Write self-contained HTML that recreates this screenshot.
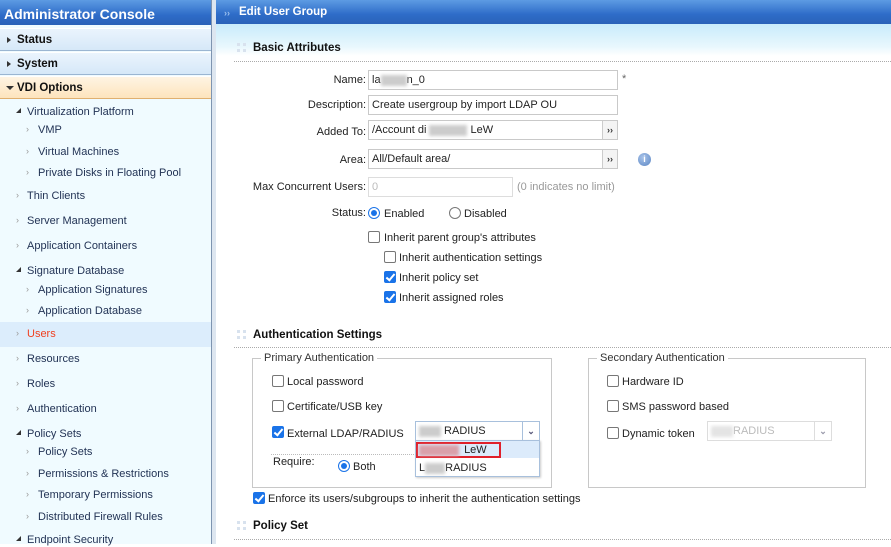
<!DOCTYPE html>
<html><head><meta charset="utf-8"><style>
*{margin:0;padding:0;box-sizing:border-box}
body{width:891px;height:544px;overflow:hidden;position:relative;background:#fff;font-family:"Liberation Sans",sans-serif;font-size:11px;color:#222}
.a{position:absolute;white-space:nowrap;line-height:14px}
.side{position:absolute;left:0;top:0;width:211px;height:544px;background:#f0fbff}
.hdr{position:absolute;top:0;height:25px;background:linear-gradient(#5d9be3,#2e6cc8 60%,#2a62b8);color:#fff;font-weight:bold}
.cat{position:absolute;left:0;width:211px;height:23px;background:linear-gradient(#eaf4fd,#d6e8f8);border-bottom:1px solid #9bb6d2;border-top:1px solid #fff;font-weight:bold;font-size:11.5px;color:#111;padding-left:17px;line-height:22px}
.ar{position:absolute;left:7px;top:8px;width:0;height:0;border-top:3.5px solid transparent;border-bottom:3.5px solid transparent;border-left:4px solid #333}
.sub{color:#223355}
.chev{position:absolute;color:#999;font-size:9px}
.tri{position:absolute;width:0;height:0;border-left:5px solid transparent;border-bottom:5px solid #333}
.in{position:absolute;height:20px;border:1px solid #c9c9c9;background:#fff;padding-left:3px;line-height:18px}
.btn{position:absolute;right:0;top:0;width:15px;height:18px;border-left:1px solid #ccc;background:#f4f4f4;font-size:9px;text-align:center;line-height:18px;font-weight:bold;color:#333}
.cb{position:absolute;width:12px;height:12px;border:1px solid #777;border-radius:2px;background:#fff}
.cb.on{background:#1a73e8;border-color:#1a73e8}
.cb.on:after{content:"";position:absolute;left:3px;top:0px;width:3px;height:7px;border:solid #fff;border-width:0 2px 2px 0;transform:rotate(40deg)}
.rd{position:absolute;width:12px;height:12px;border:1px solid #777;border-radius:50%;background:#fff}
.rd.on{border-color:#1a73e8}
.rd.on:after{content:"";position:absolute;left:2px;top:2px;width:6px;height:6px;border-radius:50%;background:#1a73e8}
.dot{position:absolute;left:234px;right:0;border-top:1px dotted #aaa}
.sec{position:absolute;font-weight:bold;font-size:11.5px;color:#111}
.grip{position:absolute;width:10px;height:10px;background:
linear-gradient(#d8e2ee,#d8e2ee) 0 0/3px 3px no-repeat,linear-gradient(#d8e2ee,#d8e2ee) 6px 0/3px 3px no-repeat,linear-gradient(#d8e2ee,#d8e2ee) 0 6px/3px 3px no-repeat,linear-gradient(#d8e2ee,#d8e2ee) 6px 6px/3px 3px no-repeat}
.fs{position:absolute;border:1px solid #c8c8c8}
.lg{position:absolute;background:#fff;padding:0 3px;top:-8px;line-height:14px;color:#333}
.blur{display:inline-block;background:#ccc;height:11px;vertical-align:middle;filter:blur(1.5px)}
.lbl{text-align:right;width:160px}
</style></head><body>

<div class="side"></div>
<div class="hdr" style="left:0;width:211px;font-size:14px;padding-left:4px;line-height:28px">Administrator Console</div>
<div class="cat" style="top:28px"><span class="ar"></span>Status</div>
<div class="cat" style="top:52px"><span class="ar"></span>System</div>
<div class="cat" style="top:76px;background:linear-gradient(#fff4e3,#fde4bd);border-bottom-color:#e0b070"><span style="position:absolute;left:6px;top:9px;border-left:4px solid transparent;border-right:4px solid transparent;border-top:4px solid #333"></span>VDI Options</div>
<div style="position:absolute;left:211px;top:0;width:1px;height:544px;background:#7e94b0"></div>
<div style="position:absolute;left:212px;top:0;width:4px;height:544px;background:#dde6f0"></div>
<div style="position:absolute;left:0;top:322px;width:211px;height:25px;background:#dcedfc"></div>

<span class="tri" style="left:16px;top:108px"></span><div class="a sub" style="left:27px;top:105px">Virtualization Platform</div>
<span class="chev" style="left:26px;top:124px">›</span><div class="a sub" style="left:38px;top:123px">VMP</div>
<span class="chev" style="left:26px;top:146px">›</span><div class="a sub" style="left:38px;top:145px">Virtual Machines</div>
<span class="chev" style="left:26px;top:167px">›</span><div class="a sub" style="left:38px;top:166px">Private Disks in Floating Pool</div>
<span class="chev" style="left:16px;top:190px">›</span><div class="a sub" style="left:27px;top:189px">Thin Clients</div>
<span class="chev" style="left:16px;top:215px">›</span><div class="a sub" style="left:27px;top:214px">Server Management</div>
<span class="chev" style="left:16px;top:240px">›</span><div class="a sub" style="left:27px;top:239px">Application Containers</div>
<span class="tri" style="left:16px;top:267px"></span><div class="a sub" style="left:27px;top:264px">Signature Database</div>
<span class="chev" style="left:26px;top:284px">›</span><div class="a sub" style="left:38px;top:283px">Application Signatures</div>
<span class="chev" style="left:26px;top:305px">›</span><div class="a sub" style="left:38px;top:304px">Application Database</div>
<span class="chev" style="left:16px;top:328px">›</span><div class="a" style="left:27px;top:327px;color:#f04020">Users</div>
<span class="chev" style="left:16px;top:353px">›</span><div class="a sub" style="left:27px;top:352px">Resources</div>
<span class="chev" style="left:16px;top:378px">›</span><div class="a sub" style="left:27px;top:377px">Roles</div>
<span class="chev" style="left:16px;top:403px">›</span><div class="a sub" style="left:27px;top:402px">Authentication</div>
<span class="tri" style="left:16px;top:430px"></span><div class="a sub" style="left:27px;top:427px">Policy Sets</div>
<span class="chev" style="left:26px;top:446px">›</span><div class="a sub" style="left:38px;top:445px">Policy Sets</div>
<span class="chev" style="left:26px;top:468px">›</span><div class="a sub" style="left:38px;top:467px">Permissions &amp; Restrictions</div>
<span class="chev" style="left:26px;top:489px">›</span><div class="a sub" style="left:38px;top:488px">Temporary Permissions</div>
<span class="chev" style="left:26px;top:511px">›</span><div class="a sub" style="left:38px;top:510px">Distributed Firewall Rules</div>
<span class="tri" style="left:16px;top:536px"></span><div class="a sub" style="left:27px;top:533px">Endpoint Security</div>

<!-- content -->
<div class="hdr" style="left:216px;width:675px;height:24px;font-size:11.5px;line-height:24px;padding-left:23px">Edit User Group</div>
<div class="a" style="left:224px;top:6px;color:#9cc0ee;font-size:9px;font-weight:bold">››</div>
<div style="position:absolute;left:216px;top:24px;width:675px;height:32px;background:linear-gradient(#c8ebfb,#e8f7fd 70%,#fff)"></div>

<div class="grip" style="left:237px;top:43px"></div>
<div class="sec" style="left:253px;top:42px">Basic Attributes</div>
<div class="dot" style="top:61px"></div>

<div class="a lbl" style="left:206px;top:73px">Name:</div>
<div class="in" style="left:368px;top:70px;width:250px">la<span class="blur" style="width:26px"></span>n_0</div>
<div class="a" style="left:622px;top:72px;color:#666">*</div>
<div class="a lbl" style="left:206px;top:98px">Description:</div>
<div class="in" style="left:368px;top:95px;width:250px">Create usergroup by import LDAP OU</div>
<div class="a lbl" style="left:206px;top:125px">Added To:</div>
<div class="in" style="left:368px;top:120px;width:250px">/Account di <span class="blur" style="width:38px"></span> LeW<div class="btn">››</div></div>
<div class="a lbl" style="left:206px;top:153px">Area:</div>
<div class="in" style="left:368px;top:149px;width:250px">All/Default area/<div class="btn">››</div></div>
<div style="position:absolute;left:638px;top:153px;width:13px;height:13px;border-radius:50%;background:radial-gradient(circle at 40% 35%,#a9c4ea,#5b86c4);color:#fff;font-size:9px;font-weight:bold;text-align:center;line-height:13px">i</div>
<div class="a lbl" style="left:206px;top:180px">Max Concurrent Users:</div>
<div class="in" style="left:368px;top:177px;width:145px;border-color:#ddd;color:#bbb">0</div>
<div class="a" style="left:517px;top:180px;color:#999">(0 indicates no limit)</div>

<div class="a lbl" style="left:206px;top:206px">Status:</div>
<div class="rd on" style="left:368px;top:207px"></div><div class="a" style="left:384px;top:207px">Enabled</div>
<div class="rd" style="left:449px;top:207px"></div><div class="a" style="left:464px;top:207px">Disabled</div>
<div class="cb" style="left:368px;top:231px"></div><div class="a" style="left:384px;top:231px">Inherit parent group's attributes</div>
<div class="cb" style="left:384px;top:251px"></div><div class="a" style="left:399px;top:251px">Inherit authentication settings</div>
<div class="cb on" style="left:384px;top:271px"></div><div class="a" style="left:399px;top:271px">Inherit policy set</div>
<div class="cb on" style="left:384px;top:291px"></div><div class="a" style="left:399px;top:291px">Inherit assigned roles</div>

<div class="grip" style="left:237px;top:330px"></div>
<div class="sec" style="left:253px;top:329px">Authentication Settings</div>
<div class="dot" style="top:347px"></div>

<div class="fs" style="left:252px;top:358px;width:300px;height:130px"><div class="lg" style="left:8px">Primary Authentication</div></div>
<div class="cb" style="left:272px;top:375px"></div><div class="a" style="left:287px;top:375px">Local password</div>
<div class="cb" style="left:272px;top:400px"></div><div class="a" style="left:287px;top:400px">Certificate/USB key</div>
<div class="cb on" style="left:272px;top:426px"></div><div class="a" style="left:287px;top:427px">External LDAP/RADIUS</div>
<div class="in" style="left:415px;top:421px;width:125px;border-color:#a8c0dc"><span class="blur" style="width:22px"></span> RADIUS<div class="btn" style="background:#fff;border-color:#a8c0dc;width:17px;color:#557">⌄</div></div>
<div style="position:absolute;left:271px;top:454px;width:143px;border-top:1px dotted #bbb"></div>
<div class="a" style="left:273px;top:455px">Require:</div>
<div class="rd on" style="left:338px;top:460px"></div><div class="a" style="left:353px;top:460px">Both</div>
<div style="position:absolute;left:415px;top:440px;width:125px;height:37px;border:1px solid #a8c0dc;background:#fff;box-shadow:1px 1px 2px #ccc"></div>
<div style="position:absolute;left:416px;top:441px;width:123px;height:17px;background:#dcebfb"></div>
<div style="position:absolute;left:416px;top:442px;width:85px;height:16px;border:2px solid #e0202a"></div>
<div class="a" style="left:419px;top:443px"><span class="blur" style="width:40px;background:#d9a0aa"></span> <span style="margin-left:2px">LeW</span></div>
<div class="a" style="left:419px;top:461px">L<span class="blur" style="width:20px"></span>RADIUS</div>

<div class="fs" style="left:588px;top:358px;width:278px;height:130px"><div class="lg" style="left:8px">Secondary Authentication</div></div>
<div class="cb" style="left:607px;top:375px"></div><div class="a" style="left:622px;top:375px">Hardware ID</div>
<div class="cb" style="left:607px;top:400px"></div><div class="a" style="left:622px;top:400px">SMS password based</div>
<div class="cb" style="left:607px;top:427px"></div><div class="a" style="left:622px;top:427px">Dynamic token</div>
<div class="in" style="left:707px;top:421px;width:125px;border-color:#ddd;color:#bbb"><span class="blur" style="width:22px;background:#e4e4e4"></span>RADIUS<div class="btn" style="background:#fff;border-color:#ddd;width:17px;color:#99a">⌄</div></div>

<div class="cb on" style="left:253px;top:492px"></div><div class="a" style="left:268px;top:492px">Enforce its users/subgroups to inherit the authentication settings</div>

<div class="grip" style="left:237px;top:521px"></div>
<div class="sec" style="left:253px;top:520px">Policy Set</div>
<div class="dot" style="top:539px"></div>
</body></html>
